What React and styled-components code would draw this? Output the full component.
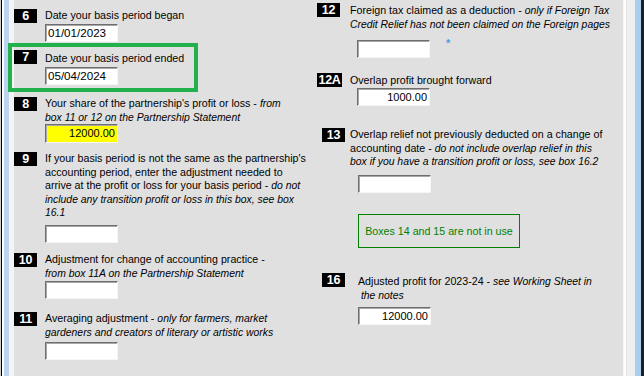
import React from "react";
import styled, { createGlobalStyle } from "styled-components";

const GlobalStyle = createGlobalStyle`
  html, body {
    margin: 0;
    padding: 0;
    background: #e0e0e0;
  }
  body {
    font-family: "Liberation Sans", Arial, sans-serif;
    color: #000;
    overflow: hidden;
  }
`;

const Window = styled.div`
  display: flex;
  width: 644px;
  height: 376px;
  overflow: hidden;
`;

const LeftEdge = styled.div`
  flex: none;
  width: 14px;
  height: 100%;
  background: linear-gradient(
    to right,
    #cfcfcf 0 1px,
    #000 1px 2px,
    #fff 2px 4px,
    #bcd4ee 4px 9px,
    #f4f4f4 9px 14px
  );
`;

const RightEdge = styled.div`
  flex: none;
  width: 21px;
  height: 100%;
  background: linear-gradient(
    to right,
    #f6f6f6 0 1px,
    #ffffff 1px 3px,
    #e4e4e4 3px 4px,
    #efefef 4px 12px,
    #a9cff0 12px 18px,
    #1e1e1e 18px 21px
  );
`;

const Main = styled.div`
  flex: 1;
  display: grid;
  grid-template-columns: 303px 1fr;
  background: #e0e0e0;
`;

const Column = styled.div`
  display: flex;
  flex-direction: column;
  align-items: flex-start;
`;

const Row = styled.div`
  display: flex;
  align-items: flex-start;
  margin-top: ${(p) => p.$mt || 0}px;
  padding-left: ${(p) => p.$indent || 0}px;
`;

const Badge = styled.div`
  flex: none;
  width: ${(p) => p.$w || 23}px;
  height: 14px;
  margin-right: ${(p) => p.$gap ?? 8}px;
  background: #000;
  color: #fff;
  font: bold 12.5px/14px "Liberation Sans", Arial, sans-serif;
  text-align: center;
  letter-spacing: -0.3px;
`;

const Body = styled.div`
  display: flex;
  flex-direction: column;
  align-items: flex-start;
  padding-top: ${(p) => p.$lt || 0}px;
`;

const Label = styled.div`
  font-size: 10.67px;
  line-height: 13.5px;
  white-space: nowrap;
`;

const Note = styled.i`
  font-size: 10.4px;
`;

const EntryRow = styled.div`
  display: flex;
  align-items: flex-start;
  gap: 16px;
  margin-top: ${(p) => p.$mt || 0}px;
  margin-left: ${(p) => p.$indent || 0}px;
`;

const Entry = styled.div`
  box-sizing: border-box;
  width: 73px;
  height: ${(p) => p.$h || 18}px;
  padding: 0 2px;
  display: flex;
  align-items: center;
  justify-content: ${(p) => (p.$right ? "flex-end" : "flex-start")};
  background: ${(p) => (p.$yellow ? "#ffff00" : "#fff")};
  border: 1px solid;
  border-color: #6e6e6e #f6f6f6 #f6f6f6 #6e6e6e;
  box-shadow: inset 1px 1px 0 #a8a8a8;
  font-size: ${(p) => (p.$right ? 11 : 11.6)}px;
  line-height: 1;
`;

const Star = styled.span`
  margin-top: -3px;
  color: #4a9fdc;
  font: bold 11px "Liberation Sans", Arial, sans-serif;
`;

const Highlight = styled.div`
  box-sizing: border-box;
  width: 190px;
  margin-top: 1px;
  margin-left: -6px;
  padding: 3px 0 3px 2px;
  border: 4px solid #22b14c;
`;

const Notice = styled.div`
  box-sizing: border-box;
  width: 162px;
  height: 34px;
  margin-top: 21px;
  margin-left: 41px;
  display: flex;
  align-items: center;
  justify-content: center;
  border: 1px solid #008000;
  color: #008000;
  font-size: 10.67px;
`;

const Field = ({
  num,
  mt,
  indent,
  badgeW,
  gap,
  lt,
  lines,
  value,
  yellow,
  right,
  entryMt,
  entryIndent,
  entryH,
  star,
}) => (
  <Row $mt={mt} $indent={indent}>
    <Badge $w={badgeW} $gap={gap}>
      {num}
    </Badge>
    <Body $lt={lt}>
      <Label>
        {lines.map((line, i) => (
          <div key={i}>{line}</div>
        ))}
      </Label>
      <EntryRow $mt={entryMt} $indent={entryIndent}>
        <Entry $yellow={yellow} $right={right} $h={entryH}>
          {value}
        </Entry>
        {star ? <Star>*</Star> : null}
      </EntryRow>
    </Body>
  </Row>
);

export default function App() {
  return (
    <>
      <GlobalStyle />
      <Window>
        <LeftEdge />
        <Main>
          <Column>
            <Field
              num="6"
              mt={9}
              lines={["Date your basis period began"]}
              value="01/01/2023"
              entryMt={1.5}
            />
            <Highlight>
              <Field
                num="7"
                lt={2}
                lines={["Date your basis period ended"]}
                value="05/04/2024"
                entryMt={1.5}
              />
            </Highlight>
            <Field
              num="8"
              mt={5}
              lines={[
                <>
                  Your share of the partnership's profit or loss -{" "}
                  <Note>from</Note>
                </>,
                <Note>box 11 or 12 on the Partnership Statement</Note>,
              ]}
              value="12000.00"
              yellow
              right
              entryH={19}
            />
            <Field
              num="9"
              mt={9}
              lines={[
                "If your basis period is not the same as the partnership's",
                "accounting period, enter the adjustment needed to",
                <>
                  arrive at the profit or loss for your basis period -{" "}
                  <Note>do not</Note>
                </>,
                <Note>
                  include any transition profit or loss in this box, see box
                </Note>,
                <Note>16.1</Note>,
              ]}
              entryMt={5.5}
            />
            <Field
              num="10"
              mt={10}
              lines={[
                "Adjustment for change of accounting practice -",
                <Note>from box 11A on the Partnership Statement</Note>,
              ]}
              entryMt={1}
            />
            <Field
              num="11"
              mt={13}
              lines={[
                <>
                  Averaging adjustment - <Note>only for farmers, market</Note>
                </>,
                <Note>
                  gardeners and creators of literary or artistic works
                </Note>,
              ]}
              entryMt={3}
            />
          </Column>

          <Column>
            <Field
              num="12"
              mt={3}
              gap={10}
              lt={1}
              lines={[
                <>
                  Foreign tax claimed as a deduction -{" "}
                  <Note>only if Foreign Tax</Note>
                </>,
                <Note>
                  Credit Relief has not been claimed on the Foreign pages
                </Note>,
              ]}
              entryMt={9}
              entryIndent={7}
              star
            />
            <Field
              num="12A"
              mt={15}
              badgeW={25}
              lt={1}
              lines={["Overlap profit brought forward"]}
              value="1000.00"
              right
              entryMt={0.5}
              entryIndent={7}
            />
            <Field
              num="13"
              mt={22}
              indent={5}
              gap={5}
              lines={[
                "Overlap relief not previously deducted on a change of",
                <>
                  accounting date -{" "}
                  <Note>do not include overlap relief in this</Note>
                </>,
                <Note>
                  box if you have a transition profit or loss, see box 16.2
                </Note>,
              ]}
              entryMt={6.5}
              entryIndent={8}
            />
            <Notice>Boxes 14 and 15 are not in use</Notice>
            <Field
              num="16"
              mt={25}
              indent={5}
              gap={13}
              lt={2}
              lines={[
                <>
                  Adjusted profit for 2023-24 -{" "}
                  <Note>see Working Sheet in</Note>
                </>,
                <Note>&nbsp;the notes</Note>,
              ]}
              value="12000.00"
              right
              entryMt={5}
            />
          </Column>
        </Main>
        <RightEdge />
      </Window>
    </>
  );
}
